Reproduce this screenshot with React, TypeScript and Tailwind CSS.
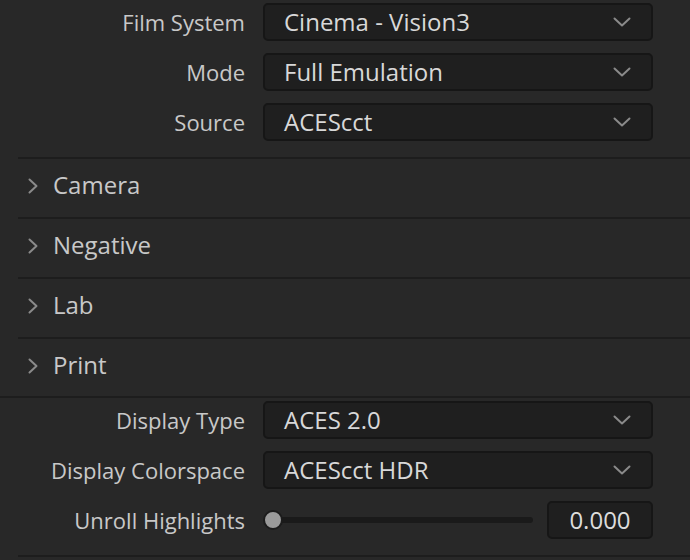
import React from "react";

const font = { fontFamily: '"Open Sans", "Noto Sans", sans-serif' };

function ChevronDown() {
  return (
    <svg width="18" height="10" viewBox="0 0 18 10" className="shrink-0">
      <polyline points="1.5,1.5 9,8.5 16.5,1.5" fill="none" stroke="#8a8a8a" strokeWidth="2" strokeLinecap="round" strokeLinejoin="round" />
    </svg>
  );
}

function ChevronRight() {
  return (
    <svg width="10" height="16" viewBox="0 0 10 16" className="shrink-0">
      <polyline points="1.5,1.5 8.5,8 1.5,14.5" fill="none" stroke="#8a8a8a" strokeWidth="2" strokeLinecap="round" strokeLinejoin="round" />
    </svg>
  );
}

function Select({ value }: { value: string }) {
  return (
    <div className="ml-[18px] flex h-[38px] w-[390px] items-center justify-between rounded-[5px] border-2 border-[#161616] bg-[#1f1f1f] pl-[19px] pr-[20px]">
      <span className="text-[24px] leading-none text-[#d8d8d8]">{value}</span>
      <ChevronDown />
    </div>
  );
}

function Row({ label, children }: { label: string; children: React.ReactNode }) {
  return (
    <div className="flex items-center">
      <div className="w-[245px] text-right text-[22px] leading-none text-[#c8c8c8]">{label}</div>
      {children}
    </div>
  );
}

function Section({ title, last }: { title: string; last?: boolean }) {
  return (
    <div
      className={
        last
          ? "ml-[18px] flex h-[57px] items-center pb-[6px]"
          : "ml-[18px] flex h-[60px] items-center border-b-2 border-[#1d1d1d] pb-[6px]"
      }
    >
      <div className="ml-[10px] mr-[15px] flex items-center pt-[2px]">
        <ChevronRight />
      </div>
      <span className="text-[24px] leading-none text-[#c8c8c8]">{title}</span>
    </div>
  );
}

export default function App() {
  return (
    <div className="h-[560px] w-[690px] overflow-hidden bg-[#282828]" style={font}>
      <div className="flex flex-col gap-[12px] pb-[16px] pt-[3px]">
        <Row label="Film System"><Select value="Cinema - Vision3" /></Row>
        <Row label="Mode"><Select value="Full Emulation" /></Row>
        <Row label="Source"><Select value="ACEScct" /></Row>
      </div>
      <div className="ml-[18px] h-[2px] bg-[#1d1d1d]" />
      <Section title="Camera" />
      <Section title="Negative" />
      <Section title="Lab" />
      <Section title="Print" last />
      <div className="h-[2px] bg-[#1d1d1d]" />
      <div className="flex flex-col gap-[12px] pb-[16px] pt-[3px]">
        <Row label="Display Type"><Select value="ACES 2.0" /></Row>
        <Row label="Display Colorspace"><Select value="ACEScct HDR" /></Row>
        <Row label="Unroll Highlights">
          <div className="ml-[18px] flex h-[38px] w-[390px] items-center">
            <div className="relative flex h-[20px] w-[270px] items-center">
              <div className="ml-[10px] h-[6px] flex-1 rounded-full bg-[#1a1a1a]" />
              <div className="absolute left-0 top-0 h-[20px] w-[20px] rounded-full border-2 border-[#1c1c1c] bg-[#9a9a9a]" />
            </div>
            <div className="ml-auto flex h-[38px] w-[106px] items-center justify-center rounded-[5px] border-2 border-[#161616] bg-[#1f1f1f]">
              <span className="text-[24px] leading-none text-[#dcdcdc]">0.000</span>
            </div>
          </div>
        </Row>
      </div>
      <div className="ml-[18px] h-[2px] bg-[#1d1d1d]" />
    </div>
  );
}
